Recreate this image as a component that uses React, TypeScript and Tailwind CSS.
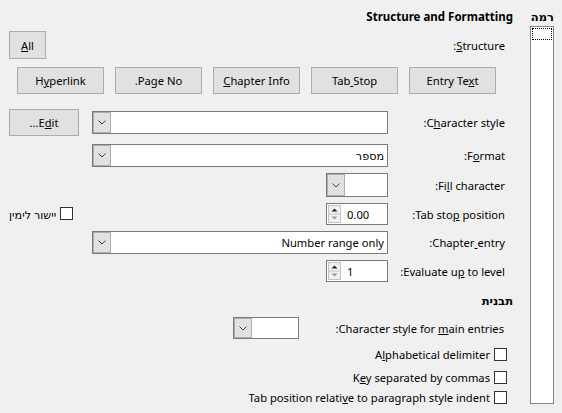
import React from "react";

const font = "font-['Noto_Sans','DejaVu_Sans',sans-serif]";

function Chevron() {
  return (
    <svg width="8" height="5" viewBox="0 0 8 5" className="block">
      <polyline points="0.5,0.5 4,4 7.5,0.5" fill="none" stroke="#444" strokeWidth="1" />
    </svg>
  );
}

function Combo({ width, height = 23, value }: { width: number; height?: number; value?: string }) {
  return (
    <div
      dir="ltr"
      className="flex border border-[#7a7a7a] bg-white shrink-0"
      style={{ width, height }}
    >
      <div className="w-[18px] h-full bg-[#e1e1e1] border border-[#adadad] flex items-center justify-center shrink-0">
        <Chevron />
      </div>
      <div dir="rtl" className="flex-1 flex items-center pr-[3px] pt-[2px] text-[11.2px] text-black">
        {value}
      </div>
    </div>
  );
}

function Spin({ value }: { value: string }) {
  return (
    <div dir="ltr" className="flex items-center w-[62px] h-[22px] border border-[#7a7a7a] bg-white shrink-0">
      <svg width="14" height="18" viewBox="0 0 14 18" className="block ml-px">
        <rect x="0.5" y="0.5" width="12" height="17" fill="#f0f0f0" stroke="#c4c4c4" />
        <line x1="1" y1="9" x2="12" y2="9" stroke="#c4c4c4" />
        <polygon points="3.5,6.5 6.5,3.5 9.5,6.5" fill="#222" />
        <polygon points="3.5,11.5 6.5,14.5 9.5,11.5" fill="#9a9a9a" />
      </svg>
      <span className="ml-[5px] pt-[2px] text-[11.2px] text-black">{value}</span>
    </div>
  );
}

function Btn({ w, h = 27, children }: { w: number; h?: number; children: React.ReactNode }) {
  return (
    <div
      className="flex items-center justify-center bg-[#e1e1e1] border border-[#adadad] text-[11.2px] text-black shrink-0"
      style={{ width: w, height: h }}
    >
      <span className="pt-[2px]">{children}</span>
    </div>
  );
}

function Check() {
  return <div className="w-[13px] h-[13px] border border-[#333] bg-white shrink-0" />;
}

function Label({ children }: { children: React.ReactNode }) {
  return <div className="w-[117px] pt-[2px] text-[11.2px] text-black whitespace-nowrap shrink-0">{children}</div>;
}

function FormRow({ h, mt, children }: { h: number; mt: number; children: React.ReactNode }) {
  return (
    <div className="flex items-center pr-[8px]" style={{ height: h, marginTop: mt }}>
      {children}
    </div>
  );
}

export default function App() {
  return (
    <div dir="rtl" className={`${font} w-[562px] h-[413px] bg-[#f0f0f0] flex pr-[8px] gap-[17px] overflow-hidden`}>
      {/* level list */}
      <div className="w-[24px] flex flex-col shrink-0">
        <div className="h-[26px] pt-[10px] text-[11.5px] font-bold text-black leading-[14px]">רמה</div>
        <div className="h-[378px] border border-[#828790] bg-white p-px">
          <div className="h-[12px] border border-dotted border-black" />
        </div>
      </div>

      {/* main */}
      <div className="w-[504px] flex flex-col shrink-0">
        <div className="h-[14px] mt-[10px] text-[11.5px] font-bold text-black leading-[14px]">
          Structure and Formatting
        </div>

        <div className="flex items-center justify-between pr-[8px] h-[28px] mt-[7px]">
          <div className="pt-[2px] text-[11.2px] text-black">
            <u>S</u>tructure:
          </div>
          <Btn w={37} h={28}>
            <u>A</u>ll
          </Btn>
        </div>

        <div className="flex items-center gap-[11px] pr-[17px] h-[27px] mt-[8px]">
          <Btn w={87}>
            Entry Te<u>x</u>t
          </Btn>
          <Btn w={87}>
            Tab<u> </u>Stop
          </Btn>
          <Btn w={87}>
            <u>C</u>hapter Info
          </Btn>
          <Btn w={87}>
            Pa<u>g</u>e No.
          </Btn>
          <Btn w={87}>
            H<u>y</u>perlink
          </Btn>
        </div>

        <FormRow h={27} mt={15}>
          <Label>
            C<u>h</u>aracter style:
          </Label>
          <div className="flex-1 flex items-center justify-between">
            <Combo width={296} />
            <Btn w={70}>
              E<u>d</u>it...
            </Btn>
          </div>
        </FormRow>

        <FormRow h={23} mt={8}>
          <Label>
            F<u>o</u>rmat:
          </Label>
          <Combo width={296} value="מספר" />
        </FormRow>

        <FormRow h={24} mt={6}>
          <Label>
            Fi<u>l</u>l character:
          </Label>
          <Combo width={62} height={24} />
        </FormRow>

        <FormRow h={22} mt={6}>
          <Label>
            Tab sto<u>p</u> position:
          </Label>
          <div className="flex-1 flex items-center justify-between">
            <Spin value="0.00" />
            <div className="flex items-center gap-[4px] text-[11.2px] text-black">
              <Check />
              <span className="pt-[2px]">יישור לימין</span>
            </div>
          </div>
        </FormRow>

        <FormRow h={23} mt={6}>
          <Label>
            Chapter<u> </u>entry:
          </Label>
          <Combo width={296} value="Number range only" />
        </FormRow>

        <FormRow h={22} mt={6}>
          <Label>
            Evaluate u<u>p</u> to level:
          </Label>
          <Spin value="1" />
        </FormRow>

        <div className="h-[14px] mt-[12px] text-[11.5px] font-bold text-black leading-[14px]">תבנית</div>

        <div className="flex items-center pr-[9px] h-[22px] mt-[9px]">
          <div className="w-[205px] pt-[2px] text-[11.2px] text-black whitespace-nowrap shrink-0">
            Character style for <u>m</u>ain entries:
          </div>
          <Combo width={66} height={22} />
        </div>

        <div className="flex items-center gap-[4px] pr-[6px] h-[13px] mt-[9px] text-[11.2px] text-black">
          <Check />
          <span className="pt-[2px]">
            A<u>l</u>phabetical delimiter
          </span>
        </div>
        <div className="flex items-center gap-[4px] pr-[6px] h-[13px] mt-[10px] text-[11.2px] text-black">
          <Check />
          <span className="pt-[2px]">
            K<u>e</u>y separated by commas
          </span>
        </div>
        <div className="flex items-center gap-[4px] pr-[6px] h-[13px] mt-[7px] text-[11.2px] text-black">
          <Check />
          <span className="pt-[2px]">
            Tab position relati<u>v</u>e to paragraph style indent
          </span>
        </div>
      </div>
    </div>
  );
}
